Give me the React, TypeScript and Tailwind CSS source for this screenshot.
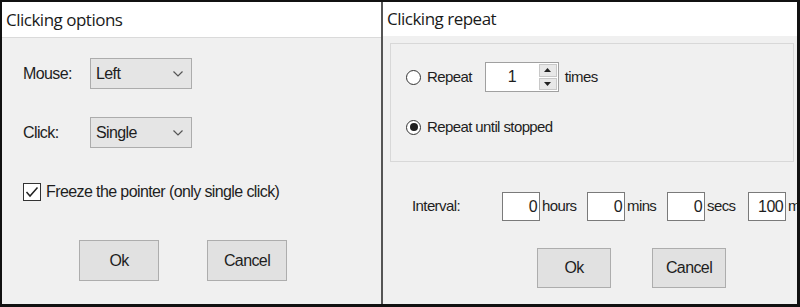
import React from "react";

const sans = { fontFamily: '"Liberation Sans", Arial, sans-serif' };
const ui = { fontFamily: '"Open Sans", "Noto Sans", sans-serif' };

const Chevron = () => (
    <svg width="10" height="6" viewBox="0 0 10 6" className="text-[#555]">
        <path d="M0.5 0.5 L5 5 L9.5 0.5" fill="none" stroke="currentColor" strokeWidth="1.2" />
    </svg>
);

const Select = ({ value }: { value: string }) => (
    <div className="flex h-[31px] w-[102px] items-center justify-between border border-[#acacac] bg-[#e5e5e5] pl-[5px] pr-[8px] text-[16px] tracking-[-0.6px] text-[#1e1e1e]">
        <span>{value}</span>
        <Chevron />
    </div>
);

const Button = ({ label, w, h }: { label: string; w: string; h: string }) => (
    <div
        className={`flex items-center justify-center border border-[#adadad] bg-[#e1e1e1] text-[16px] tracking-[-0.6px] text-[#1e1e1e] ${w} ${h}`}>
        {label}
    </div>
);

const Radio = ({ checked }: { checked?: boolean }) => (
    <div className="flex h-[15px] w-[15px] items-center justify-center rounded-full border border-[#333] bg-white">
        {checked && <div className="h-[8px] w-[8px] rounded-full bg-[#1e1e1e]" />}
    </div>
);

const NumBox = ({ value }: { value: string }) => (
    <div className="flex h-[29px] w-[38px] shrink-0 items-center justify-end border border-[#7a7a7a] bg-white pr-[2px] text-[16px] tracking-[-0.6px] text-[#1e1e1e]">
        {value}
    </div>
);

const App = () => {
    return (
        <div
            className="flex h-[307px] w-[800px] overflow-hidden bg-[#111] pb-[3px] pl-[2px] pr-[3px] pt-[2px]"
            style={sans}>
            {/* left dialog */}
            <div className="flex w-[379px] shrink-0 flex-col bg-[#f0f0f0]">
                <div
                    className="flex h-[36px] items-center border-b border-[#dadada] bg-white pl-[4px] text-[17px] tracking-[-0.5px] text-[#1a1a1a]"
                    style={ui}>
                    Clicking options
                </div>
                <div className="flex flex-col pl-[21px] pt-[20px] text-[16px] tracking-[-0.6px] text-[#1e1e1e]">
                    <div className="flex items-center">
                        <span className="w-[67px]">Mouse:</span>
                        <Select value="Left" />
                    </div>
                    <div className="mt-[28px] flex items-center">
                        <span className="w-[67px]">Click:</span>
                        <Select value="Single" />
                    </div>
                    <div className="mt-[34px] flex h-[20px] items-center gap-[5px]">
                        <div className="flex h-[18px] w-[18px] items-center justify-center border border-[#333] bg-white">
                            <svg width="14" height="12" viewBox="0 0 14 12">
                                <path d="M1.5 6 L5 10 L12.5 1.5" fill="none" stroke="#222" strokeWidth="1.5" />
                            </svg>
                        </div>
                        <span>Freeze the pointer (only single click)</span>
                    </div>
                    <div className="mt-[38px] flex gap-[48px] pl-[56px]">
                        <Button label="Ok" w="w-[80px]" h="h-[41px]" />
                        <Button label="Cancel" w="w-[80px]" h="h-[41px]" />
                    </div>
                </div>
            </div>

            <div className="w-[2px] shrink-0 bg-[#555]" />

            {/* right dialog */}
            <div className="flex min-w-0 flex-1 flex-col overflow-hidden bg-[#f0f0f0]">
                <div
                    className="flex h-[34px] shrink-0 items-center bg-white pl-[4px] text-[17px] tracking-[-0.5px] text-[#1a1a1a]"
                    style={ui}>
                    Clicking repeat
                </div>
                <div className="ml-[7px] mr-[3px] mt-[7px] flex h-[119px] flex-col border border-[#d8d8d8] pl-[15px] pt-[18px] text-[15px] tracking-[-0.6px] text-[#1e1e1e]">
                    <div className="flex h-[30px] items-center">
                        <Radio />
                        <span className="ml-[6px]">Repeat</span>
                        <div className="ml-[13px] flex h-[30px] w-[74px] border border-[#a0a0a0] bg-white">
                            <div className="flex flex-1 items-center justify-center text-[16px]">1</div>
                            <div className="flex w-[20px] flex-col gap-[1px] p-[1px]">
                                <div className="flex flex-1 items-center justify-center border border-[#c8c8c8] bg-[#e8e8e8]">
                                    <svg width="7" height="4" viewBox="0 0 7 4">
                                        <path d="M0 4 L3.5 0 L7 4 Z" fill="#222" />
                                    </svg>
                                </div>
                                <div className="flex flex-1 items-center justify-center border border-[#c8c8c8] bg-[#e8e8e8]">
                                    <svg width="7" height="4" viewBox="0 0 7 4">
                                        <path d="M0 0 L3.5 4 L7 0 Z" fill="#222" />
                                    </svg>
                                </div>
                            </div>
                        </div>
                        <span className="ml-[6px]">times</span>
                    </div>
                    <div className="mt-[25px] flex h-[20px] items-center">
                        <Radio checked />
                        <span className="ml-[6px]">Repeat until stopped</span>
                    </div>
                </div>

                <div className="mt-[30px] flex h-[29px] items-center whitespace-nowrap pl-[29px] text-[15px] tracking-[-0.6px] text-[#1e1e1e]">
                    <span className="w-[90px] shrink-0">Interval:</span>
                    <NumBox value="0" />
                    <span className="w-[47px] shrink-0 pl-[2px]">hours</span>
                    <NumBox value="0" />
                    <span className="w-[42px] shrink-0 pl-[2px]">mins</span>
                    <NumBox value="0" />
                    <span className="w-[43px] shrink-0 pl-[2px]">secs</span>
                    <NumBox value="100" />
                    <span className="shrink-0 pl-[2px]">ms</span>
                </div>

                <div className="mt-[27px] flex gap-[41px] pl-[154px]">
                    <Button label="Ok" w="w-[74px]" h="h-[40px]" />
                    <Button label="Cancel" w="w-[74px]" h="h-[40px]" />
                </div>
            </div>
        </div>
    );
};

export default App;
